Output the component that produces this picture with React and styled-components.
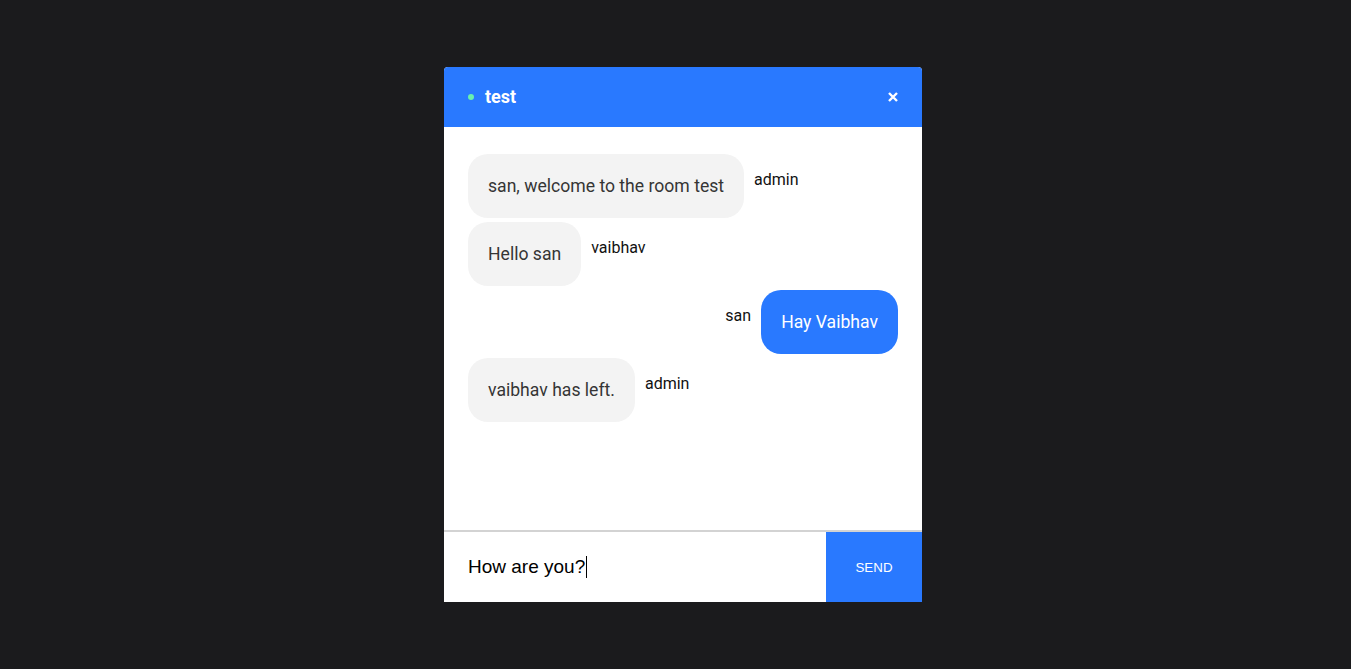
import React from 'react';
import styled, { createGlobalStyle } from 'styled-components';

const GlobalStyle = createGlobalStyle`
  html, body {
    margin: 0;
    padding: 0;
    height: 100%;
    background: #1b1b1d;
  }
  #root {
    height: 100%;
  }
`;

const Page = styled.div`
  height: 100%;
  display: flex;
  align-items: center;
  justify-content: center;
  padding-left: 15px;
  box-sizing: border-box;
  font-family: Roboto, "Liberation Sans", sans-serif;
`;

const Card = styled.div`
  width: 478px;
  height: 535px;
  display: flex;
  flex-direction: column;
  background: #fff;
  border-radius: 4px 4px 0 0;
  overflow: hidden;
`;

const Header = styled.div`
  height: 60px;
  flex-shrink: 0;
  display: flex;
  align-items: center;
  padding: 0 23px 0 24px;
  background: #2979ff;
  color: #fff;
`;

const Dot = styled.span`
  width: 6px;
  height: 6px;
  border-radius: 50%;
  background: #69f0ae;
  margin-right: 11px;
`;

const Title = styled.h3`
  margin: 0;
  flex: 1;
  font-size: 18px;
  font-weight: 700;
  line-height: 1;
`;

const Close = styled.button`
  border: 0;
  padding: 0;
  background: none;
  display: flex;
  cursor: pointer;
`;

const Messages = styled.div`
  flex: 1;
  display: flex;
  flex-direction: column;
  gap: 4px;
  padding: 27px 24px 0;
`;

const Row = styled.div`
  display: flex;
  align-items: flex-start;
  justify-content: ${(p) => (p.mine ? 'flex-end' : 'flex-start')};
`;

const Bubble = styled.div`
  padding: 20px;
  border-radius: 20px;
  font-size: 17.6px;
  line-height: 24px;
  background: ${(p) => (p.mine ? '#2979ff' : '#f3f3f3')};
  color: ${(p) => (p.mine ? '#fff' : '#353535')};
`;

const Sender = styled.p`
  margin: 0;
  padding: 16px 10px 0;
  font-size: 16px;
  line-height: 19px;
  color: #111;
`;

const Form = styled.form`
  height: 70px;
  flex-shrink: 0;
  display: flex;
  border-top: 2px solid #d3d3d3;
`;

const Field = styled.div`
  flex: 1;
  display: flex;
  align-items: center;
  padding: 0 24px;
  font-family: "Liberation Sans", Arial, sans-serif;
  font-size: 19px;
  color: #000;
`;

const Caret = styled.span`
  display: inline-block;
  width: 1px;
  height: 22px;
  background: #000;
  margin-left: 1px;
`;

const Send = styled.button`
  width: 96px;
  border: 0;
  background: #2979ff;
  color: #fff;
  font-family: "Liberation Sans", Arial, sans-serif;
  font-size: 13.33px;
  text-transform: uppercase;
`;

const messages = [
  { user: 'admin', text: 'san, welcome to the room test' },
  { user: 'vaibhav', text: 'Hello san' },
  { user: 'san', text: 'Hay Vaibhav', mine: true },
  { user: 'admin', text: 'vaibhav has left.' },
];

export default function App() {
  return (
    <Page>
      <GlobalStyle />
      <Card>
        <Header>
          <Dot />
          <Title>test</Title>
          <Close aria-label="close">
            <svg width="12" height="12" viewBox="0 0 12 12">
              <path d="M2 2 L10 10 M10 2 L2 10" stroke="#fff" strokeWidth="2.4" />
            </svg>
          </Close>
        </Header>
        <Messages>
          {messages.map((m, i) => (
            <Row key={i} mine={m.mine}>
              {m.mine && <Sender>{m.user}</Sender>}
              <Bubble mine={m.mine}>{m.text}</Bubble>
              {!m.mine && <Sender>{m.user}</Sender>}
            </Row>
          ))}
        </Messages>
        <Form onSubmit={(e) => e.preventDefault()}>
          <Field>
            How are you?
            <Caret />
          </Field>
          <Send type="submit">Send</Send>
        </Form>
      </Card>
    </Page>
  );
}
